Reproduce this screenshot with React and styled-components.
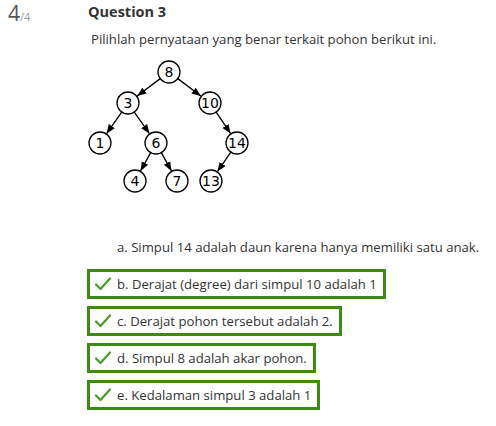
import styled, { createGlobalStyle } from 'styled-components';

const GlobalStyle = createGlobalStyle`
  body {
    margin: 0;
    background: #ffffff;
    font-family: "Open Sans", "Liberation Sans", sans-serif;
    color: #333333;
  }
`;

const Page = styled.div`
  display: grid;
  grid-template-columns: 88px 1fr;
  width: 496px;
  height: 426px;
`;

const Info = styled.div`
  padding: 1px 0 0 8px;
  color: #555555;
`;

const Num = styled.span`
  font-size: 21px;
  line-height: 24px;
`;

const Total = styled.span`
  font-size: 11px;
  color: #999999;
`;

const Content = styled.div`
  display: flex;
  flex-direction: column;
`;

const Title = styled.h3`
  margin: 0;
  padding-top: 2px;
  font-size: 14.5px;
  line-height: 20px;
  font-weight: 700;
  color: #333333;
`;

const Prompt = styled.p`
  margin: 8px 0 0 3px;
  font-size: 13.15px;
  line-height: 18px;
  color: #333333;
`;

const TreeBox = styled.div`
  margin-top: 8px;
  height: 142px;
`;

const Answers = styled.div`
  display: flex;
  flex-direction: column;
  gap: 7px;
  margin-top: 34px;
  margin-left: -1px;
`;

const Option = styled.div`
  display: flex;
  align-items: center;
  gap: 6px;
  width: fit-content;
  box-sizing: border-box;
  height: 30px;
  padding: 0 6px 0 5px;
  border: 3px solid ${(p) => (p.$correct ? '#3d8a17' : 'transparent')};
  font-size: 13.15px;
  color: #333333;
  white-space: nowrap;
`;

const CheckSlot = styled.span`
  display: inline-flex;
  width: 16px;
  height: 16px;
`;

const nodes = [
  { id: '8', x: 81, y: 16 },
  { id: '3', x: 40, y: 47 },
  { id: '10', x: 122, y: 47 },
  { id: '1', x: 12, y: 87 },
  { id: '6', x: 68, y: 87 },
  { id: '14', x: 149, y: 87 },
  { id: '4', x: 47, y: 125 },
  { id: '7', x: 89, y: 125 },
  { id: '13', x: 123, y: 125 },
];

const edges = [
  ['8', '3'],
  ['8', '10'],
  ['3', '1'],
  ['3', '6'],
  ['10', '14'],
  ['6', '4'],
  ['6', '7'],
  ['14', '13'],
];

const R = 11;

function Tree() {
  const byId = Object.fromEntries(nodes.map((n) => [n.id, n]));
  return (
    <svg width="170" height="142" viewBox="0 0 170 142">
      <defs>
        <marker id="arr" viewBox="0 0 10 10" refX="10" refY="5" markerWidth="7" markerHeight="7" orient="auto">
          <path d="M0 1 L10 5 L0 9 z" fill="#000" />
        </marker>
      </defs>
      {edges.map(([a, b]) => {
        const p = byId[a];
        const c = byId[b];
        const dx = c.x - p.x;
        const dy = c.y - p.y;
        const len = Math.hypot(dx, dy);
        const ux = dx / len;
        const uy = dy / len;
        return (
          <line
            key={a + b}
            x1={p.x + ux * R}
            y1={p.y + uy * R}
            x2={c.x - ux * (R + 0.5)}
            y2={c.y - uy * (R + 0.5)}
            stroke="#000"
            strokeWidth="1.3"
            markerEnd="url(#arr)"
          />
        );
      })}
      {nodes.map((n) => (
        <g key={n.id}>
          <circle cx={n.x} cy={n.y} r={R} fill="#fff" stroke="#000" strokeWidth="1.3" />
          <text
            x={n.x}
            y={n.y + 5}
            textAnchor="middle"
            fontSize="14"
            fontFamily="DejaVu Sans, sans-serif"
            fill="#000"
          >
            {n.id}
          </text>
        </g>
      ))}
    </svg>
  );
}

function Check() {
  return (
    <svg width="16" height="16" viewBox="0 0 16 16">
      <path d="M1 8.5 L5.5 13 L15 2.5" fill="none" stroke="#4a9a2a" strokeWidth="2.2" strokeLinecap="round" strokeLinejoin="round" />
    </svg>
  );
}

const options = [
  { text: 'a. Simpul 14 adalah daun karena hanya memiliki satu anak.', correct: false },
  { text: 'b. Derajat (degree) dari simpul 10 adalah 1', correct: true },
  { text: 'c. Derajat pohon tersebut adalah 2.', correct: true },
  { text: 'd. Simpul 8 adalah akar pohon.', correct: true },
  { text: 'e. Kedalaman simpul 3 adalah 1', correct: true },
];

export default function App() {
  return (
    <>
      <GlobalStyle />
      <Page>
        <Info>
          <Num>4</Num>
          <Total>/4</Total>
        </Info>
        <Content>
          <Title>Question 3</Title>
          <Prompt>Pilihlah pernyataan yang benar terkait pohon berikut ini.</Prompt>
          <TreeBox>
            <Tree />
          </TreeBox>
          <Answers>
            {options.map((o) => (
              <Option key={o.text} $correct={o.correct}>
                <CheckSlot>{o.correct && <Check />}</CheckSlot>
                {o.text}
              </Option>
            ))}
          </Answers>
        </Content>
      </Page>
    </>
  );
}
